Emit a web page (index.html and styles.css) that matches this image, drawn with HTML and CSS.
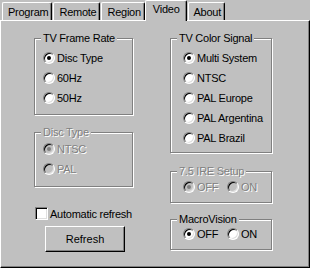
FILE: index.html
```html
<!DOCTYPE html>
<html lang="en">

<head>
    <meta charset="UTF-8">
    <title>Video Settings</title>
    <link rel="stylesheet" href="styles.css">
</head>

<body>

    <div class="window">
        <div class="tabs">
            <div class="tab">Program</div>
            <div class="tab">Remote</div>
            <div class="tab">Region</div>
            <div class="tab active">Video</div>
            <div class="tab">About</div>
        </div>

        <div class="panel">
            <div class="col">
                <fieldset class="group frame-rate">
                    <legend>TV Frame Rate</legend>
                    <label class="opt"><span class="radio on"></span>Disc Type</label>
                    <label class="opt"><span class="radio"></span>60Hz</label>
                    <label class="opt"><span class="radio"></span>50Hz</label>
                </fieldset>

                <fieldset class="group disc-type disabled">
                    <legend>Disc Type</legend>
                    <label class="opt"><span class="radio on"></span>NTSC</label>
                    <label class="opt"><span class="radio"></span>PAL</label>
                </fieldset>

                <label class="check"><span class="box"></span>Automatic refresh</label>

                <button class="btn">Refresh</button>
            </div>

            <div class="col">
                <fieldset class="group color-signal">
                    <legend>TV Color Signal</legend>
                    <label class="opt"><span class="radio on"></span>Multi System</label>
                    <label class="opt"><span class="radio"></span>NTSC</label>
                    <label class="opt"><span class="radio"></span>PAL Europe</label>
                    <label class="opt"><span class="radio"></span>PAL Argentina</label>
                    <label class="opt"><span class="radio"></span>PAL Brazil</label>
                </fieldset>

                <fieldset class="group ire disabled">
                    <legend>7.5 IRE Setup</legend>
                    <div class="inline">
                        <label class="opt"><span class="radio on"></span>OFF</label>
                        <label class="opt"><span class="radio"></span>ON</label>
                    </div>
                </fieldset>

                <fieldset class="group macro">
                    <legend>MacroVision</legend>
                    <div class="inline">
                        <label class="opt"><span class="radio on"></span>OFF</label>
                        <label class="opt"><span class="radio"></span>ON</label>
                    </div>
                </fieldset>
            </div>
        </div>
    </div>

</body>

</html>
```

FILE: styles.css
```css
* {
  box-sizing: border-box;
}

body {
  margin: 0;
  background: #c0c0c0;
  font-family: "Liberation Sans", Arial, sans-serif;
  font-size: 11px;
  letter-spacing: -0.25px;
  color: #000;
}

.window {
  width: 310px;
  height: 268px;
  display: flex;
  flex-direction: column;
}

/* tab strip */
.tabs {
  display: flex;
  align-items: flex-end;
  height: 20px;
  padding-left: 2px;
}

.tab {
  height: 18px;
  padding: 3px 3px 0 5px;
  margin-right: 1px;
  line-height: 13px;
  white-space: nowrap;
  border-top: 1px solid #fff;
  border-left: 1px solid #fff;
  border-right: 1px solid #000;
  border-radius: 2px 2px 0 0;
  box-shadow: inset -1px 0 #808080;
}

.tab.active {
  position: relative;
  z-index: 1;
  height: 21px;
  margin: 0 1px -1px -1px;
  padding: 2px 6px 0 7px;
  background: #c0c0c0;
}

/* page body */
.panel {
  flex: 1;
  display: grid;
  grid-template-columns: 99px 102px;
  column-gap: 37px;
  align-items: start;
  padding: 11px 0 0 33px;
  border-top: 1px solid #fff;
  border-left: 1px solid #fff;
  border-right: 1px solid #000;
  border-bottom: 1px solid #000;
  box-shadow: inset -1px -1px #808080;
}

.col {
  display: flex;
  flex-direction: column;
  align-items: flex-start;
}

/* etched group boxes */
.group {
  width: 100%;
  min-width: 0;
  margin: 0;
  padding: 0;
  border: 1px solid #808080;
  box-shadow: 1px 1px 0 #fff, inset 1px 1px 0 #fff;
}

.group legend {
  margin-left: 6px;
  padding: 0 2px;
  line-height: 13px;
  white-space: nowrap;
  background: #c0c0c0;
}

.frame-rate {
  padding: 3px 0 6px;
}

.disc-type {
  margin-top: 11px;
  padding-bottom: 7px;
}

.color-signal {
  padding: 3px 0 4px;
}

.ire {
  margin-top: 12px;
  padding-bottom: 6px;
}

.macro {
  margin-top: 10px;
  padding-bottom: 7px;
}

.opt {
  display: flex;
  align-items: center;
  gap: 2px;
  height: 20px;
  padding-left: 8px;
  white-space: nowrap;
}

.color-signal .opt {
  padding-left: 12px;
}

.inline {
  display: flex;
  padding-left: 12px;
}

.inline .opt {
  padding-left: 0;
}

.inline .opt:first-child {
  width: 44px;
}

.ire .opt {
  height: 18px;
}

.macro .opt {
  height: 16px;
}

.disabled legend,
.disabled .opt {
  color: #808080;
  text-shadow: 1px 1px 0 #fff;
}

/* radio */
.radio {
  position: relative;
  flex: none;
  width: 12px;
  height: 12px;
  border-radius: 50%;
  background: #fff;
  border: 1px solid;
  border-color: #808080 #fff #fff #808080;
  box-shadow: inset 1px 1px #000, inset -1px -1px #dfdfdf;
}

.radio.on::after {
  content: "";
  position: absolute;
  left: 3px;
  top: 3px;
  width: 4px;
  height: 4px;
  border-radius: 50%;
  background: #000;
}

.disabled .radio {
  background: #c0c0c0;
}

.disabled .radio.on::after {
  background: #808080;
}

/* checkbox */
.check {
  display: flex;
  align-items: center;
  gap: 2px;
  height: 13px;
  margin: 20px 0 0 1px;
  white-space: nowrap;
}

.box {
  flex: none;
  width: 13px;
  height: 13px;
  background: #fff;
  border: 1px solid;
  border-color: #808080 #fff #fff #808080;
  box-shadow: inset 1px 1px #000, inset -1px -1px #dfdfdf;
}

/* push button */
.btn {
  width: 80px;
  height: 26px;
  margin: 6px 0 0 11px;
  padding: 0;
  font: inherit;
  color: #000;
  background: #c0c0c0;
  border: 1px solid;
  border-color: #fff #000 #000 #fff;
  box-shadow: inset -1px -1px #808080;
}
```
